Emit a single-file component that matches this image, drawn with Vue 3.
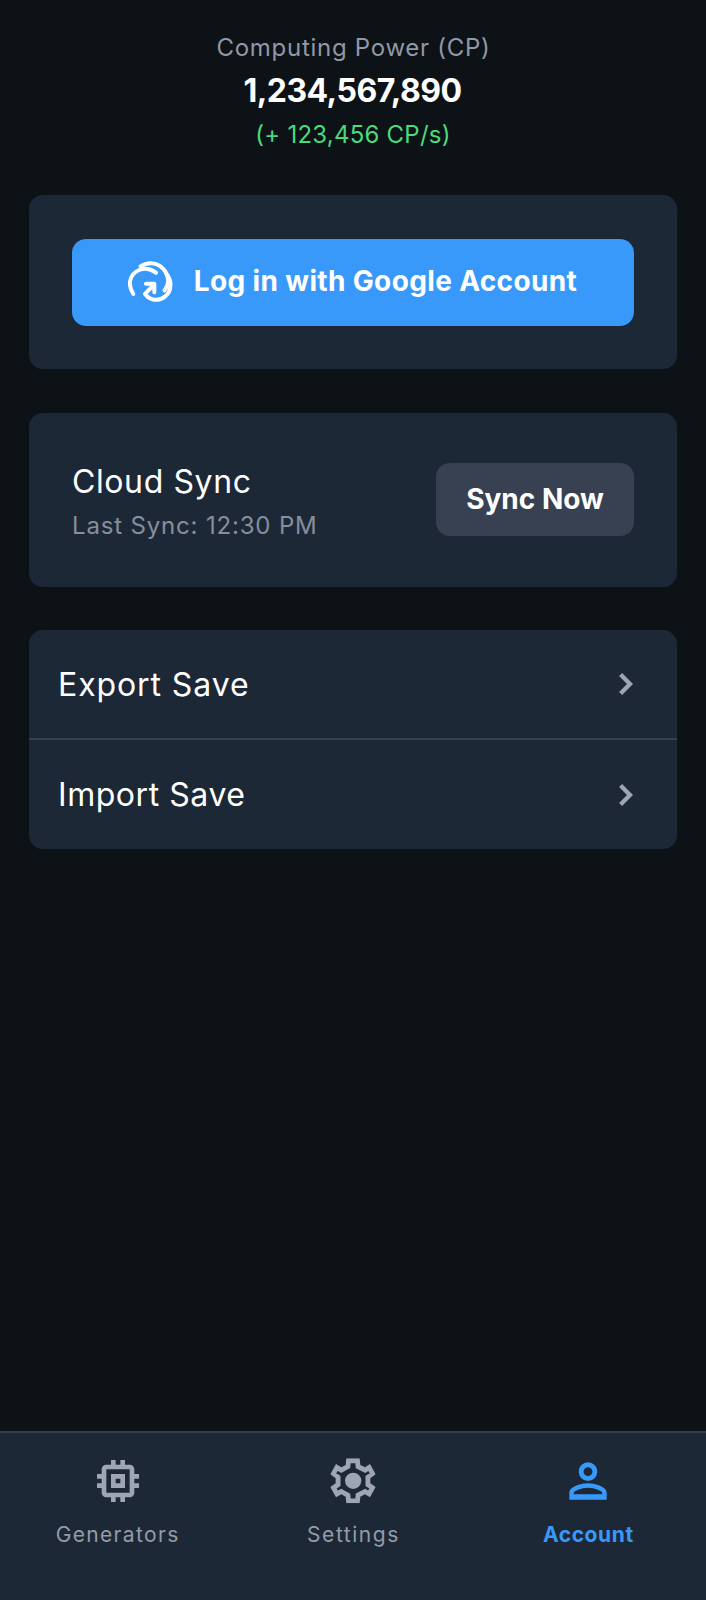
<script setup>
const rows = [
  { label: 'Export Save', cls: 'export' },
  { label: 'Import Save', cls: 'import' },
]
</script>

<template>
  <div class="app">
    <header class="stats">
      <div class="stat-label">Computing Power (CP)</div>
      <div class="stat-value">1,234,567,890</div>
      <div class="stat-rate">(+ 123,456 CP/s)</div>
    </header>
    <main class="content">
      <section class="card login-card">
        <button class="login">
          <svg class="login-icon" viewBox="54 30 136 126">
            <path d="M70 132 C52 105 58 72 88 60 C105 53 124 57 138 68" />
            <path d="M92 49 C118 31 151 40 167 66 C178 86 175 107 164 121" />
            <path d="M170 72 C187 93 185 123 166 139 C144 156 118 151 105 132 L130 106" />
            <path d="M108 101 H133 V127" />
          </svg>
          <span>Log in with Google Account</span>
        </button>
      </section>
      <section class="card sync-card">
        <div class="sync-info">
          <div class="title">Cloud Sync</div>
          <div class="sub">Last Sync: 12:30 PM</div>
        </div>
        <button class="sync">Sync Now</button>
      </section>
      <section class="card list">
        <div v-for="r in rows" :key="r.label" class="row" :class="r.cls">
          <span>{{ r.label }}</span>
          <svg class="chev" viewBox="0 0 14 22"><path d="M1.600 1.600 11 11l-9.400 9.400" /></svg>
        </div>
      </section>
    </main>
    <nav class="nav">
      <div class="tab generators">
        <svg viewBox="0 0 24 24"><path d="M15 9H9v6h6V9zm-2 4h-2v-2h2v2zm8-2V9h-2V7c0-1.100-.9-2-2-2h-2V3h-2v2h-2V3H9v2H7c-1.100 0-2 .9-2 2v2H3v2h2v2H3v2h2v2c0 1.100.9 2 2 2h2v2h2v-2h2v2h2v-2h2c1.100 0 2-.9 2-2v-2h2v-2h-2v-2h2zm-4 6H7V7h10v10z" /></svg>
        <span>Generators</span>
      </div>
      <div class="tab settings">
        <svg viewBox="255 98 168 168">
          <clipPath id="gear"><path d="M319 114H359L361 134 375 141 390 131 407 162 391 174V189L407 200 390 231 375 222 361 229 359 249H319L317 229 304 222 288 231 271 200 287 189V174L271 162 288 131 304 141 317 134Z" /></clipPath>
          <path class="gear-line" clip-path="url(#gear)" d="M319 114H359L361 134 375 141 390 131 407 162 391 174V189L407 200 390 231 375 222 361 229 359 249H319L317 229 304 222 288 231 271 200 287 189V174L271 162 288 131 304 141 317 134Z" />
          <circle cx="339.500" cy="181.500" r="24.500" />
        </svg>
        <span>Settings</span>
      </div>
      <div class="tab account">
        <svg viewBox="0 0 24 24"><path fill-rule="evenodd" d="M12 4a4 4 0 1 0 0 8 4 4 0 0 0 0-8m0 2.100a1.900 1.900 0 1 1 0 3.800 1.900 1.900 0 0 1 0-3.800M12 13c-2.670 0-8 1.340-8 4v3h16v-3c0-2.660-5.330-4-8-4m6.100 4.700H5.900V17c0-.64 3.130-2.100 6.100-2.100s6.100 1.460 6.100 2.100z" /></svg>
        <span>Account</span>
      </div>
    </nav>
  </div>
</template>

<style>
body { background: #0d1216; }
</style>
<style scoped>
.app { height: 1600px; display: flex; flex-direction: column; background: #0d1216; color: #fff; font-family: Inter, "Liberation Sans", sans-serif; overflow: hidden; white-space: nowrap; }
.stats { box-sizing: border-box; padding-top: 28px; height: 195.400px; display: flex; flex-direction: column; align-items: center; }
.stat-label { font-size: 24px; line-height: 40px; color: #9298a5; letter-spacing: 0.720px; padding-left: 1px; }
.stat-value { font-size: 32px; line-height: 46px; font-weight: 700; letter-spacing: -0.540px; padding-right: 1px; }
.stat-rate { font-size: 24px; line-height: 42px; color: #48db7d; letter-spacing: 0.230px; }
.content { flex: 1; min-height: 0; padding: 0 29px; }
.card { background: #1d2836; border-radius: 14px; margin-bottom: 43.200px; }
.login-card { height: 174px; padding: 43.600px 43px 43px; box-sizing: border-box; }
button { font: inherit; border: 0; color: #fff; border-radius: 14px; padding: 0; font-weight: 700; font-size: 28px; }
.login { width: 100%; height: 87px; background: #3899fa; display: flex; align-items: center; justify-content: flex-start; padding: 0 0 2px 56px; gap: 20.500px; box-shadow: 0 0 1px #0b1118; letter-spacing: 0.350px; }
.login-icon { width: 45.300px; height: 42px; fill: none; stroke: #fff; stroke-width: 12px; stroke-linecap: round; stroke-linejoin: round; }
.sync-card { height: 174px; padding: 0 43px; display: flex; align-items: center; justify-content: space-between; }
.sync-info { padding-top: 6.400px; }
.title { font-size: 32px; line-height: 46px; letter-spacing: 0.600px; }
.sub { font-size: 24px; line-height: 42px; color: #878e9b; letter-spacing: 0.830px; }
.sync { width: 198px; height: 73px; padding-bottom: 1px; background: #384151; }
.list { height: 219px; }
.row { height: 108.500px; box-sizing: border-box; padding: 0 43px 0 29px; display: flex; align-items: center; justify-content: space-between; font-size: 32px; }
.row + .row { border-top: 2px solid #36404e; height: 110.500px; }
.export { letter-spacing: 0.900px; }
.import { letter-spacing: 0.550px; }
.chev { width: 14px; height: 22px; margin-right: 1px; fill: none; stroke: #9da4b2; stroke-width: 4.300; }
.nav { height: 169px; flex-shrink: 0; box-sizing: border-box; border-top: 2px solid #343e4e; background: #1d2836; display: grid; grid-template-columns: repeat(3, 1fr); }
.tab { display: flex; flex-direction: column; align-items: center; padding-top: 20px; color: #949ba8; font-size: 21px; line-height: 30px; gap: 11px; }
.tab svg { width: 56px; height: 56px; fill: #9ea5b3; }
.tab .gear-line { fill: none; stroke: #9ea5b3; stroke-width: 29; }
.generators { letter-spacing: 1.350px; }
.settings { letter-spacing: 1.550px; }
.settings span { padding-left: 1px; }
.account { color: #3899fa; font-weight: 700; letter-spacing: 0.600px; }
.account svg { fill: #3899fa; }
</style>
